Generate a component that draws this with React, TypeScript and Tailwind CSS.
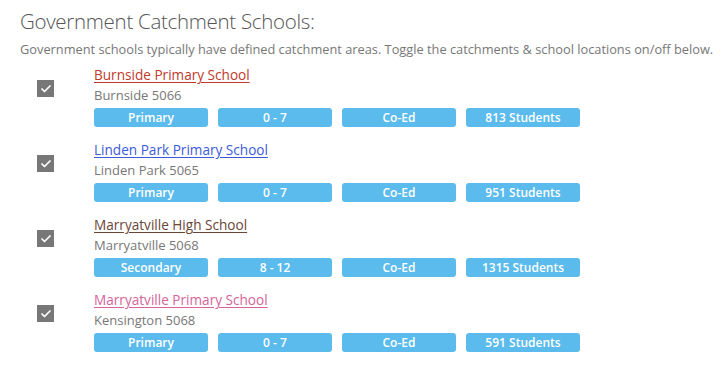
import { Check } from "lucide-react";

const schools = [
  {
    name: "Burnside Primary School",
    color: "text-[#c0392b] decoration-[#c0392b]",
    suburb: "Burnside 5066",
    type: "Primary",
    years: "0 - 7",
    gender: "Co-Ed",
    students: "813 Students",
  },
  {
    name: "Linden Park Primary School",
    color: "text-[#3b5bdb] decoration-[#3b5bdb]",
    suburb: "Linden Park 5065",
    type: "Primary",
    years: "0 - 7",
    gender: "Co-Ed",
    students: "951 Students",
  },
  {
    name: "Marryatville High School",
    color: "text-[#6b4636] decoration-[#6b4636]",
    suburb: "Marryatville 5068",
    type: "Secondary",
    years: "8 - 12",
    gender: "Co-Ed",
    students: "1315 Students",
  },
  {
    name: "Marryatville Primary School",
    color: "text-[#d6639a] decoration-[#d6639a]",
    suburb: "Kensington 5068",
    type: "Primary",
    years: "0 - 7",
    gender: "Co-Ed",
    students: "591 Students",
  },
];

function Badge({ label }: { label: string }) {
  return (
    <span className="flex h-[19px] w-[114px] items-center justify-center rounded-[3px] bg-[#5bbbec] text-[12px] font-semibold text-white">
      {label}
    </span>
  );
}

export default function App() {
  return (
    <div className="min-h-screen bg-white px-5 pt-[3px] font-['Open_Sans',sans-serif]">
      {/* Heading */}
      <h1 className="text-[20.5px] font-light leading-[36px] tracking-[-0.3px] text-[#555]">
        Government Catchment Schools:
      </h1>
      <p className="whitespace-nowrap text-[12.8px] leading-[20px] text-[#777]">
        Government schools typically have defined catchment areas. Toggle the
        catchments &amp; school locations on/off below.
      </p>

      {/* School list */}
      <div className="mt-[6px] flex flex-col gap-[13px]">
        {schools.map((s) => (
          <div key={s.name} className="flex">
            <div className="ml-[17px] mt-[15px] flex h-[17px] w-[17px] items-center justify-center bg-[#777]">
              <Check size={12} strokeWidth={3.5} className="text-white" />
            </div>
            <div className="ml-[40px] flex flex-col">
              <a
                href="#"
                className={`text-[13.6px] leading-[20px] underline underline-offset-2 ${s.color}`}
              >
                {s.name}
              </a>
              <span className="text-[13px] leading-[20px] text-[#777]">
                {s.suburb}
              </span>
              <div className="mt-[3px] flex gap-[10px]">
                <Badge label={s.type} />
                <Badge label={s.years} />
                <Badge label={s.gender} />
                <Badge label={s.students} />
              </div>
            </div>
          </div>
        ))}
      </div>
    </div>
  );
}
